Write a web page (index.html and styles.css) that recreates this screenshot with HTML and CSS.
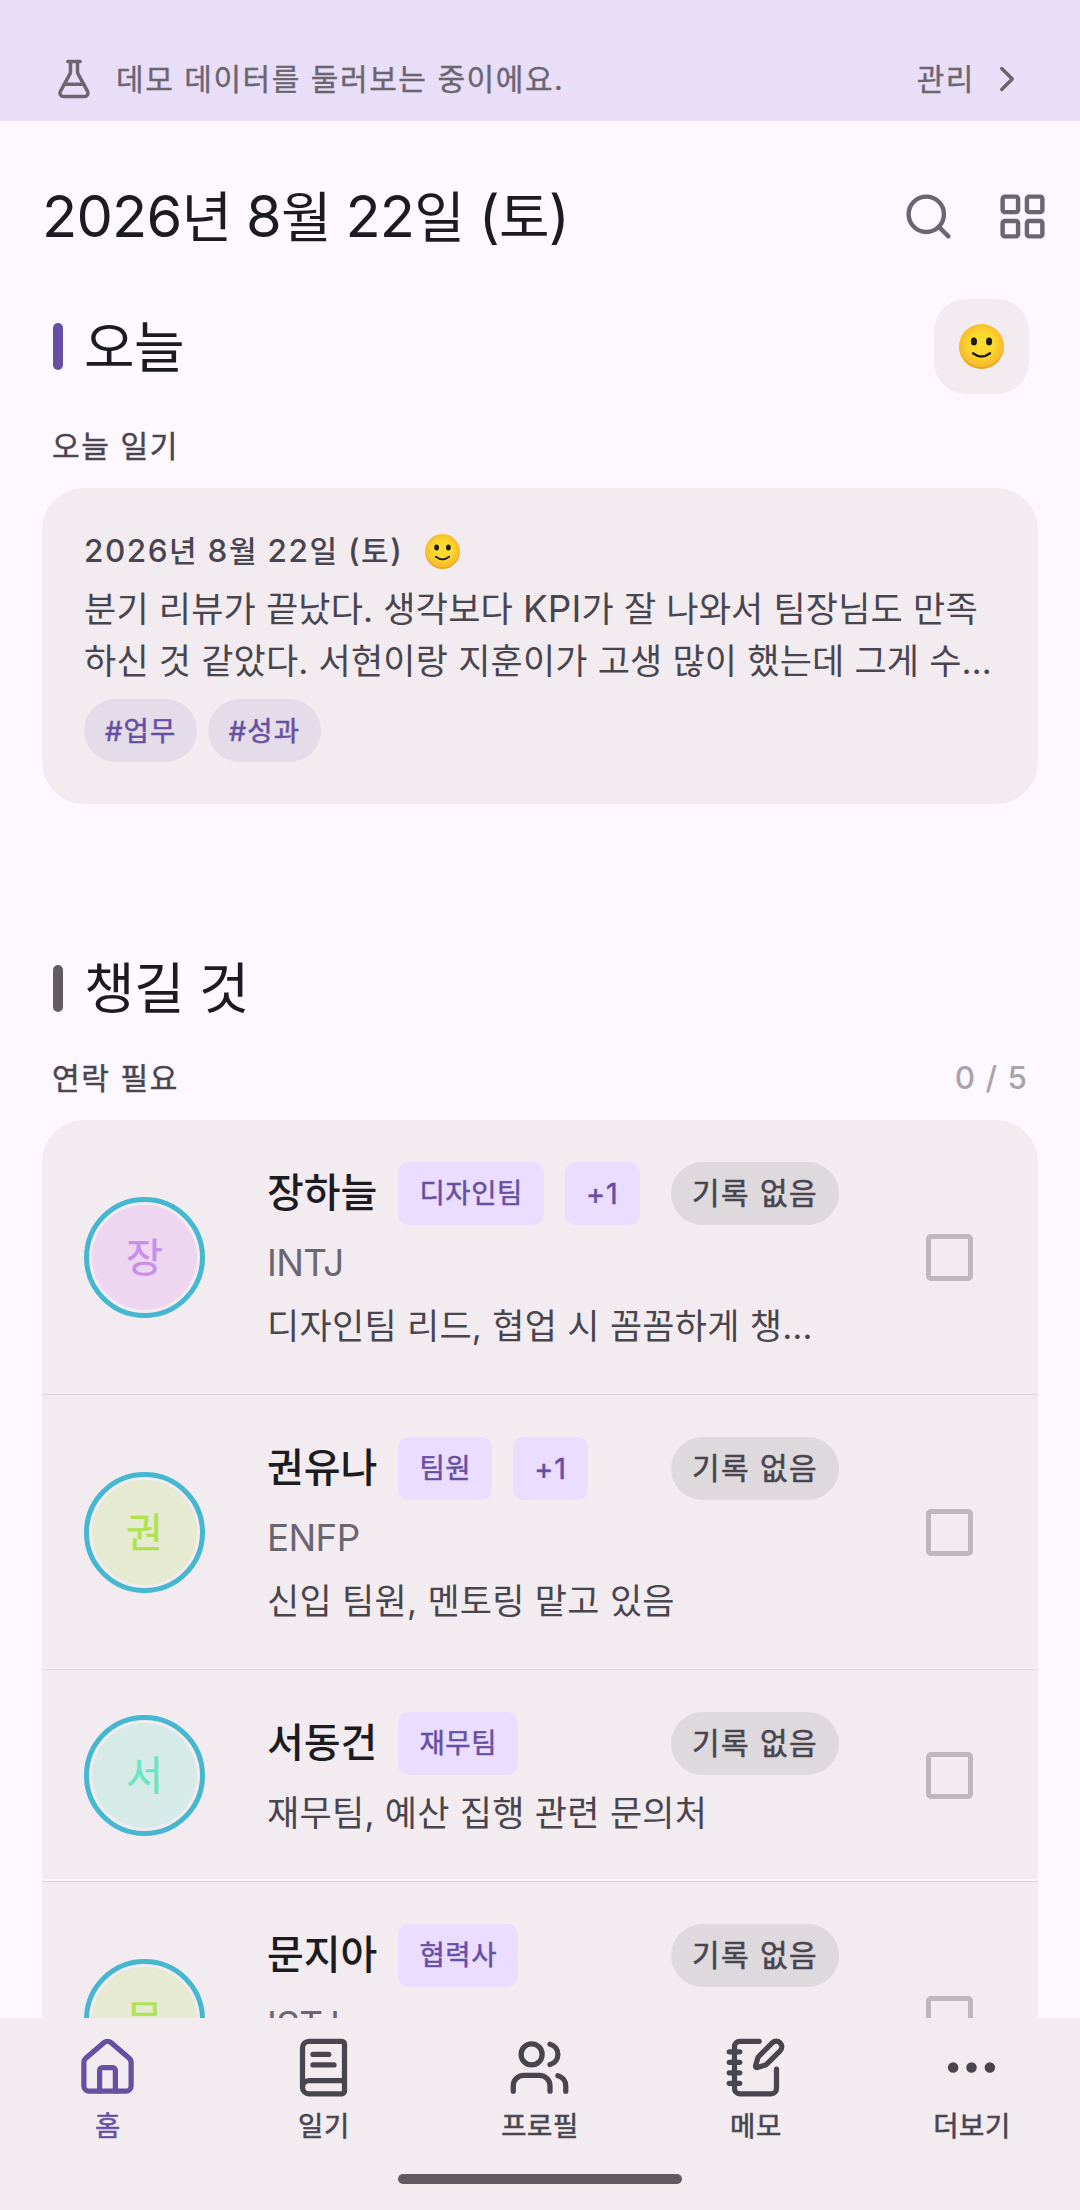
FILE: index.html
```html
<!DOCTYPE html>
<html lang="ko">
<head>
<meta charset="utf-8">
<title>홈</title>
<link rel="stylesheet" href="styles.css">
</head>
<body>
<svg class="defs" aria-hidden="true">
  <defs>
    <radialGradient id="face-fill" cx="50%" cy="45%" r="52%">
      <stop offset="0" stop-color="#fbdf30"/>
      <stop offset="0.55" stop-color="#fbd72e"/>
      <stop offset="0.78" stop-color="#f9c42c"/>
      <stop offset="0.94" stop-color="#f7bd2b"/>
      <stop offset="1" stop-color="#e9a31f"/>
    </radialGradient>
    <symbol id="face" viewBox="0 0 44 44">
      <circle cx="22" cy="22" r="22" fill="url(#face-fill)"/>
      <ellipse cx="14.6" cy="17" rx="3" ry="3.8" fill="#1f1a1c"/>
      <ellipse cx="29.4" cy="17" rx="3" ry="3.8" fill="#1f1a1c"/>
      <path d="M13.6 28.6Q22 35 30.4 28.6" fill="none" stroke="#1f1a1c" stroke-width="2.2" stroke-linecap="round"/>
    </symbol>
  </defs>
</svg>
<div class="app">
  <header class="banner">
    <svg class="icon icon-sm" viewBox="0 0 24 24"><path d="M14 2v6a2 2 0 0 0 .245.96l5.51 10.08A2 2 0 0 1 18 22H6a2 2 0 0 1-1.755-2.96l5.51-10.08A2 2 0 0 0 10 8V2"/><path d="M6.453 15h11.094"/><path d="M8.5 2h7"/></svg>
    <span class="banner-text">데모 데이터를 둘러보는 중이에요.</span>
    <span class="banner-link">관리</span>
    <svg class="icon icon-sm" viewBox="0 0 24 24"><path d="m9 18 6-6-6-6"/></svg>
  </header>
  <main class="content">
    <div class="topbar">
      <h1 class="date"><span class="lat">2026</span>년 <span class="lat">8</span>월 <span class="lat">22</span>일 <span class="lat">(</span>토<span class="lat">)</span></h1>
      <svg class="icon icon-md" viewBox="0 0 24 24"><circle cx="11" cy="11" r="8"/><path d="m21 21-4.34-4.34"/></svg>
      <svg class="icon icon-md" viewBox="0 0 24 24"><rect width="7" height="7" x="3" y="3" rx="1"/><rect width="7" height="7" x="14" y="3" rx="1"/><rect width="7" height="7" x="14" y="14" rx="1"/><rect width="7" height="7" x="3" y="14" rx="1"/></svg>
    </div>

    <section>
      <div class="section-head">
        <span class="bar bar-primary"></span>
        <h2 class="section-title">오늘</h2>
        <button class="mood"><svg class="face-lg"><use href="#face"/></svg></button>
      </div>
      <div class="sub sub-today"><span class="sub-label">오늘 일기</span></div>
      <article class="diary">
        <div class="diary-date">
          <span><span class="lat">2026</span>년 <span class="lat">8</span>월 <span class="lat">22</span>일 <span class="lat">(</span>토<span class="lat">)</span></span>
          <svg class="face-sm"><use href="#face"/></svg>
        </div>
        <p class="diary-text body-text">분기 리뷰가 끝났다. 생각보다 <span class="lat">KPI</span>가 잘 나와서 팀장님도 만족<br>하신 것 같았다. 서현이랑 지훈이가 고생 많이 했는데 그게 수…</p>
        <div class="tags"><span class="tag">#업무</span><span class="tag">#성과</span></div>
      </article>
    </section>

    <section class="todo">
      <div class="section-head section-head-todo">
        <span class="bar bar-muted"></span>
        <h2 class="section-title">챙길 것</h2>
      </div>
      <div class="sub sub-todo"><span class="sub-label">연락 필요</span><span class="count">0 / 5</span></div>
      <div class="people">
        <div class="person">
          <div class="avatar"><span class="avatar-in violet">장</span></div>
          <div class="info">
            <div class="line"><span class="name">장하늘</span><span class="chip">디자인팀</span><span class="chip chip-more"><span class="lat">+1</span></span><span class="pill">기록 없음</span></div>
            <div class="mbti">INTJ</div>
            <div class="body-text">디자인팀 리드, 협업 시 꼼꼼하게 챙…</div>
          </div>
          <span class="check"></span>
        </div>
        <div class="person gap-thin">
          <div class="avatar"><span class="avatar-in lime">권</span></div>
          <div class="info">
            <div class="line"><span class="name">권유나</span><span class="chip">팀원</span><span class="chip chip-more"><span class="lat">+1</span></span><span class="pill">기록 없음</span></div>
            <div class="mbti">ENFP</div>
            <div class="body-text">신입 팀원, 멘토링 맡고 있음</div>
          </div>
          <span class="check"></span>
        </div>
        <div class="person gap-wide">
          <div class="avatar"><span class="avatar-in mint">서</span></div>
          <div class="info">
            <div class="line"><span class="name">서동건</span><span class="chip">재무팀</span><span class="pill">기록 없음</span></div>
            <div class="body-text">재무팀, 예산 집행 관련 문의처</div>
          </div>
          <span class="check"></span>
        </div>
        <div class="person">
          <div class="avatar"><span class="avatar-in lime">문</span></div>
          <div class="info">
            <div class="line"><span class="name">문지아</span><span class="chip">협력사</span><span class="pill">기록 없음</span></div>
            <div class="mbti">ISTJ</div>
            <div class="body-text"></div>
          </div>
          <span class="check"></span>
        </div>
      </div>
    </section>
  </main>
  <footer class="bottom">
    <nav class="tabs">
      <a class="tab active"><svg class="icon icon-lg" viewBox="0 0 24 24"><path d="M15 21v-8a1 1 0 0 0-1-1h-4a1 1 0 0 0-1 1v8"/><path d="M3 10a2 2 0 0 1 .709-1.528l7-5.999a2 2 0 0 1 2.582 0l7 5.999A2 2 0 0 1 21 10v9a2 2 0 0 1-2 2H5a2 2 0 0 1-2-2z"/></svg><span>홈</span></a>
      <a class="tab"><svg class="icon icon-lg" viewBox="0 0 24 24"><path d="M4 19.5v-15A2.5 2.5 0 0 1 6.5 2H19a1 1 0 0 1 1 1v18a1 1 0 0 1-1 1H6.5a1 1 0 0 1 0-5H20"/><path d="M8 11h8"/><path d="M8 7h6"/></svg><span>일기</span></a>
      <a class="tab"><svg class="icon icon-lg" viewBox="0 0 24 24"><path d="M16 21v-2a4 4 0 0 0-4-4H6a4 4 0 0 0-4 4v2"/><circle cx="9" cy="7" r="4"/><path d="M22 21v-2a4 4 0 0 0-3-3.87"/><path d="M16 3.13a4 4 0 0 1 0 7.75"/></svg><span>프로필</span></a>
      <a class="tab"><svg class="icon icon-lg" viewBox="0 0 24 24"><path d="M13.4 2H6a2 2 0 0 0-2 2v16a2 2 0 0 0 2 2h12a2 2 0 0 0 2-2v-7.4"/><path d="M2 6h4"/><path d="M2 10h4"/><path d="M2 14h4"/><path d="M2 18h4"/><path d="M21.378 5.626a1 1 0 1 0-3.004-3.004l-5.01 5.012a2 2 0 0 0-.506.854l-.837 2.87a.5.5 0 0 0 .62.62l2.87-.837a2 2 0 0 0 .854-.506z"/></svg><span>메모</span></a>
      <a class="tab"><svg class="icon icon-lg" viewBox="0 0 24 24"><circle cx="12" cy="12" r="1"/><circle cx="19" cy="12" r="1"/><circle cx="5" cy="12" r="1"/></svg><span>더보기</span></a>
    </nav>
    <div class="home-indicator"></div>
  </footer>
</div>
</body>
</html>
```
FILE: styles.css
```css
* { box-sizing: border-box; }

body {
  margin: 0;
  background: #fdf8ff;
  color: #1c1b1f;
  font-family: Inter, "Noto Sans CJK KR", sans-serif;
}

h1, h2, p { margin: 0; font-weight: 400; }
button { border: 0; padding: 0; font: inherit; }
.defs { position: absolute; width: 0; height: 0; }

.app {
  width: 1080px;
  height: 2210px;
  display: flex;
  flex-direction: column;
  overflow: hidden;
}

.lat { font-size: 1.05em; }

.icon {
  display: block;
  flex: none;
  fill: none;
  stroke: currentColor;
  stroke-width: 2;
  stroke-linecap: round;
  stroke-linejoin: round;
}
.icon-sm { width: 42px; height: 42px; }
.icon-md { width: 53px; height: 53px; }
.icon-lg { width: 63px; height: 63px; }

.banner {
  flex: none;
  height: 121px;
  padding: 37px 52px 0 53px;
  display: flex;
  align-items: flex-start;
  background: #e8def8;
  color: #6b6570;
  font-size: 30px;
  font-weight: 400;
  line-height: 42px;
  letter-spacing: 1.55px;
  -webkit-text-stroke: 0.4px currentColor;
}
.banner .icon { margin-top: 21px; }
.banner span { margin-top: 21px; }
.banner-text { margin-left: 21px; flex: 1; }
.banner-link { margin-right: 11px; }

.content { flex: 1; min-height: 0; overflow: hidden; }

.topbar {
  height: 178px;
  padding: 12px 31px 0 42px;
  display: flex;
  align-items: center;
  gap: 41px;
  color: #6b6570;
}
.date {
  flex: 1;
  color: #1c1b1f;
  font-size: 55px;
  line-height: 74px;
  letter-spacing: -0.8px;
  white-space: nowrap;
}

.section-head {
  height: 95px;
  padding: 0 51px 0 53px;
  display: flex;
  align-items: center;
}
.section-head-todo { height: 74px; }
.bar { width: 10px; height: 47px; border-radius: 5px; margin-right: 21px; }
.bar-primary { background: #6750a4; }
.bar-muted { background: #625b63; }
.section-title { flex: 1; font-size: 55px; line-height: 74px; letter-spacing: -0.6px; }
.mood {
  width: 95px;
  height: 95px;
  border-radius: 32px;
  background: #f2ecf0;
  display: grid;
  place-items: center;
}
.face-lg { width: 45px; height: 45px; }
.face-sm { width: 35px; height: 35px; }

.sub {
  display: flex;
  justify-content: space-between;
  padding: 0 52px;
  color: #49454f;
  font-size: 30px;
  font-weight: 500;
  line-height: 42px;
  letter-spacing: 1.6px;
}
.sub-today { margin: 31px 0 21px; }
.sub-todo { margin: 32px 0 21px; }
.sub-label { font-weight: 400; -webkit-text-stroke: 0.5px currentColor; }
.count { font-size: 31.5px; letter-spacing: 1px; color: #a8a4aa; }

.body-text {
  min-height: 52.5px;
  font-size: 35px;
  line-height: 52.5px;
  letter-spacing: 0.26px;
  color: #49454f;
  white-space: nowrap;
}

.diary {
  margin: 0 42px;
  height: 316px;
  padding: 42px;
  border-radius: 42px;
  background: #f2ecf0;
}
.diary-date {
  display: flex;
  align-items: center;
  gap: 22px;
  color: #49454f;
  font-size: 30px;
  font-weight: 500;
  line-height: 42px;
  letter-spacing: 1.5px;
}
.diary-text { margin-top: 10.5px; letter-spacing: 0.18px; }
.tags { display: flex; gap: 10.5px; margin-top: 11px; }
.tag {
  height: 63px;
  padding: 0 21px;
  border-radius: 32px;
  background: #e4dce8;
  color: #6750a4;
  font-size: 27.5px;
  font-weight: 400;
  line-height: 64px;
  letter-spacing: 1.1px;
  -webkit-text-stroke: 0.5px currentColor;
}

.todo { margin-top: 147px; }
.people {
  margin: 0 42px;
  border-radius: 42px 42px 0 0;
  background: #f2ecf0;
}
.person {
  padding: 42px;
  padding-right: 0;
  border-bottom: 1px solid #dcd7dc;
  display: grid;
  grid-template-columns: 121px 572px 47px;
  column-gap: 62px;
  align-items: center;
}
.person .check { margin-left: 25px; }
.gap-thin { box-shadow: inset 0 -1px #f8f3f8; }
.gap-wide { box-shadow: inset 0 -2px #f9f4fb; }

.avatar {
  width: 121px;
  height: 121px;
  border: 5px solid #45b7d1;
  border-radius: 50%;
  padding: 3px;
}
.avatar-in {
  display: block;
  height: 105px;
  border-radius: 50%;
  text-align: center;
  font-size: 40px;
  font-weight: 400;
  line-height: 106px;
  -webkit-text-stroke: 0.4px currentColor;
}
.violet { color: #c68fe8; background: #eed6f1; }
.lime { color: #aee34f; background: #e5ead1; }
.mint { color: #67e6c3; background: #d6ebe7; }

.info { display: flex; flex-direction: column; gap: 10.5px; }
.line { display: flex; align-items: center; height: 63px; margin-bottom: 1px; }
.name {
  height: 63px;
  margin-right: 21px;
  font-size: 40px;
  font-weight: 500;
  line-height: 62px;
  white-space: nowrap;
}
.chip {
  height: 63px;
  padding: 0 21px;
  margin-right: 21px;
  border-radius: 10.5px;
  background: #eaddff;
  color: #6750a4;
  font-size: 27.5px;
  font-weight: 400;
  line-height: 63px;
  letter-spacing: 0.6px;
  -webkit-text-stroke: 0.5px currentColor;
}
.chip-more { letter-spacing: 1px; }
.pill {
  width: 168px;
  height: 63px;
  margin-left: auto;
  border-radius: 32px;
  background: #ddd9dd;
  color: #49454f;
  text-align: center;
  white-space: nowrap;
  font-size: 30px;
  font-weight: 400;
  line-height: 63px;
  letter-spacing: 1.4px;
  -webkit-text-stroke: 0.6px currentColor;
}
.mbti { font-size: 36.75px; line-height: 51.5px; height: 52.5px; letter-spacing: -0.6px; color: #6b6570; }
.check {
  width: 47px;
  height: 47px;
  border: 5px solid #bdb8be;
  border-radius: 5px;
}

.bottom {
  flex: none;
  height: 192px;
  padding-top: 18px;
  background: #f2ecf0;
}
.tabs { display: grid; grid-template-columns: repeat(5, 1fr); }
.tab {
  display: flex;
  flex-direction: column;
  align-items: center;
  gap: 6px;
  color: #49454f;
  font-size: 27.5px;
  font-weight: 400;
  line-height: 42px;
  letter-spacing: 0.6px;
  -webkit-text-stroke: 0.6px currentColor;
}
.tab .icon { margin: 0 1px 0 -1px; }
.active { color: #6750a4; }
.home-indicator {
  width: 284px;
  height: 10px;
  margin: 27px auto 0;
  border-radius: 5px;
  background: #605b62;
}
```
